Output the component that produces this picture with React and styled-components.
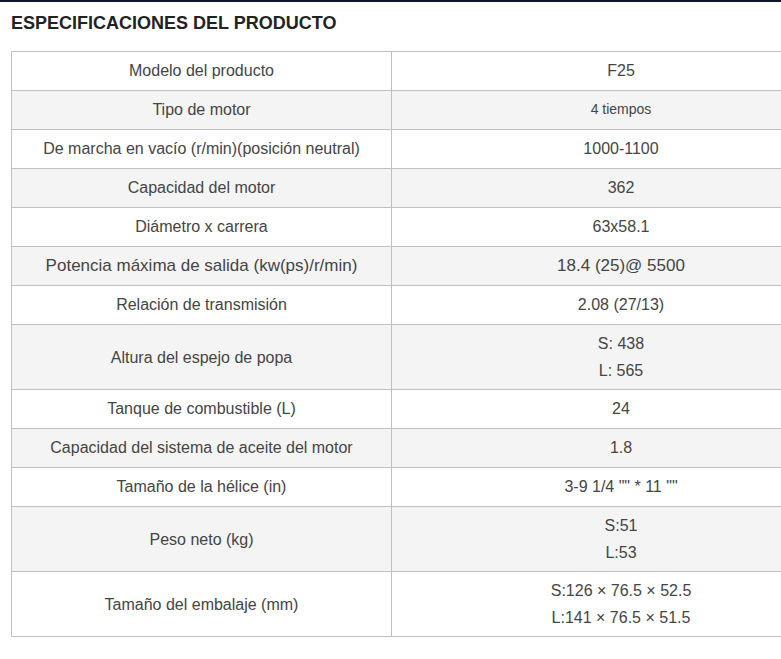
import React from 'react';
import styled, { createGlobalStyle } from 'styled-components';

const GlobalStyle = createGlobalStyle`
  html, body {
    margin: 0;
    padding: 0;
    background: #fff;
    overflow: hidden;
  }
  body {
    font-family: 'Liberation Sans', Arial, sans-serif;
  }
`;

const SpecsSection = styled.section`
  border-top: 2px solid #0b1633;
  padding: 0 0 0 11px;
  overflow: hidden;
`;

const Title = styled.h2`
  margin: 0;
  padding: 11px 0 0;
  height: 49px;
  box-sizing: border-box;
  font-size: 18px;
  font-weight: 700;
  line-height: 20px;
  color: #222;
`;

const SpecsTable = styled.table`
  width: 840px;
  border-collapse: collapse;
  color: #444;
  font-size: 16px;
`;

const Row = styled.tr`
  background: ${(p) => (p.$shaded ? '#f4f4f4' : '#fff')};
`;

const Cell = styled.td`
  border: 1px solid #c0c0c0;
  padding: ${(p) => (p.$multi ? '5px 8px' : '5px 8px 6px')};
  line-height: 27px;
  text-align: center;
  vertical-align: middle;
  width: ${(p) => (p.$label ? '363px' : 'auto')};
  font-size: ${(p) => p.$size || 16}px;
`;

const specs = [
  { label: 'Modelo del producto', value: ['F25'] },
  { label: 'Tipo de motor', value: ['4 tiempos'], valueSize: 14 },
  { label: 'De marcha en vacío (r/min)(posición neutral)', value: ['1000-1100'] },
  { label: 'Capacidad del motor', value: ['362'] },
  { label: 'Diámetro x carrera', value: ['63x58.1'] },
  { label: 'Potencia máxima de salida (kw(ps)/r/min)', value: ['18.4 (25)@ 5500'], labelSize: 17, valueSize: 17 },
  { label: 'Relación de transmisión', value: ['2.08 (27/13)'] },
  { label: 'Altura del espejo de popa', value: ['S: 438', 'L: 565'] },
  { label: 'Tanque de combustible (L)', value: ['24'] },
  { label: 'Capacidad del sistema de aceite del motor', value: ['1.8'] },
  { label: 'Tamaño de la hélice (in)', value: ['3-9 1/4 "" * 11 ""'] },
  { label: 'Peso neto (kg)', value: ['S:51', 'L:53'] },
  { label: 'Tamaño del embalaje (mm)', value: ['S:126 × 76.5 × 52.5', 'L:141 × 76.5 × 51.5'] },
];

const App = () => (
  <>
    <GlobalStyle />
    <SpecsSection>
      <Title>ESPECIFICACIONES DEL PRODUCTO</Title>
      <SpecsTable>
        <tbody>
          {specs.map((s, i) => {
            const multi = s.value.length > 1;
            return (
              <Row key={s.label} $shaded={i % 2 === 1}>
                <Cell $label $multi={multi} $size={s.labelSize}>{s.label}</Cell>
                <Cell $multi={multi} $size={s.valueSize}>
                  {s.value.map((v, j) => (
                    <React.Fragment key={v}>
                      {j > 0 && <br />}
                      {v}
                    </React.Fragment>
                  ))}
                </Cell>
              </Row>
            );
          })}
        </tbody>
      </SpecsTable>
    </SpecsSection>
  </>
);

export default App;
